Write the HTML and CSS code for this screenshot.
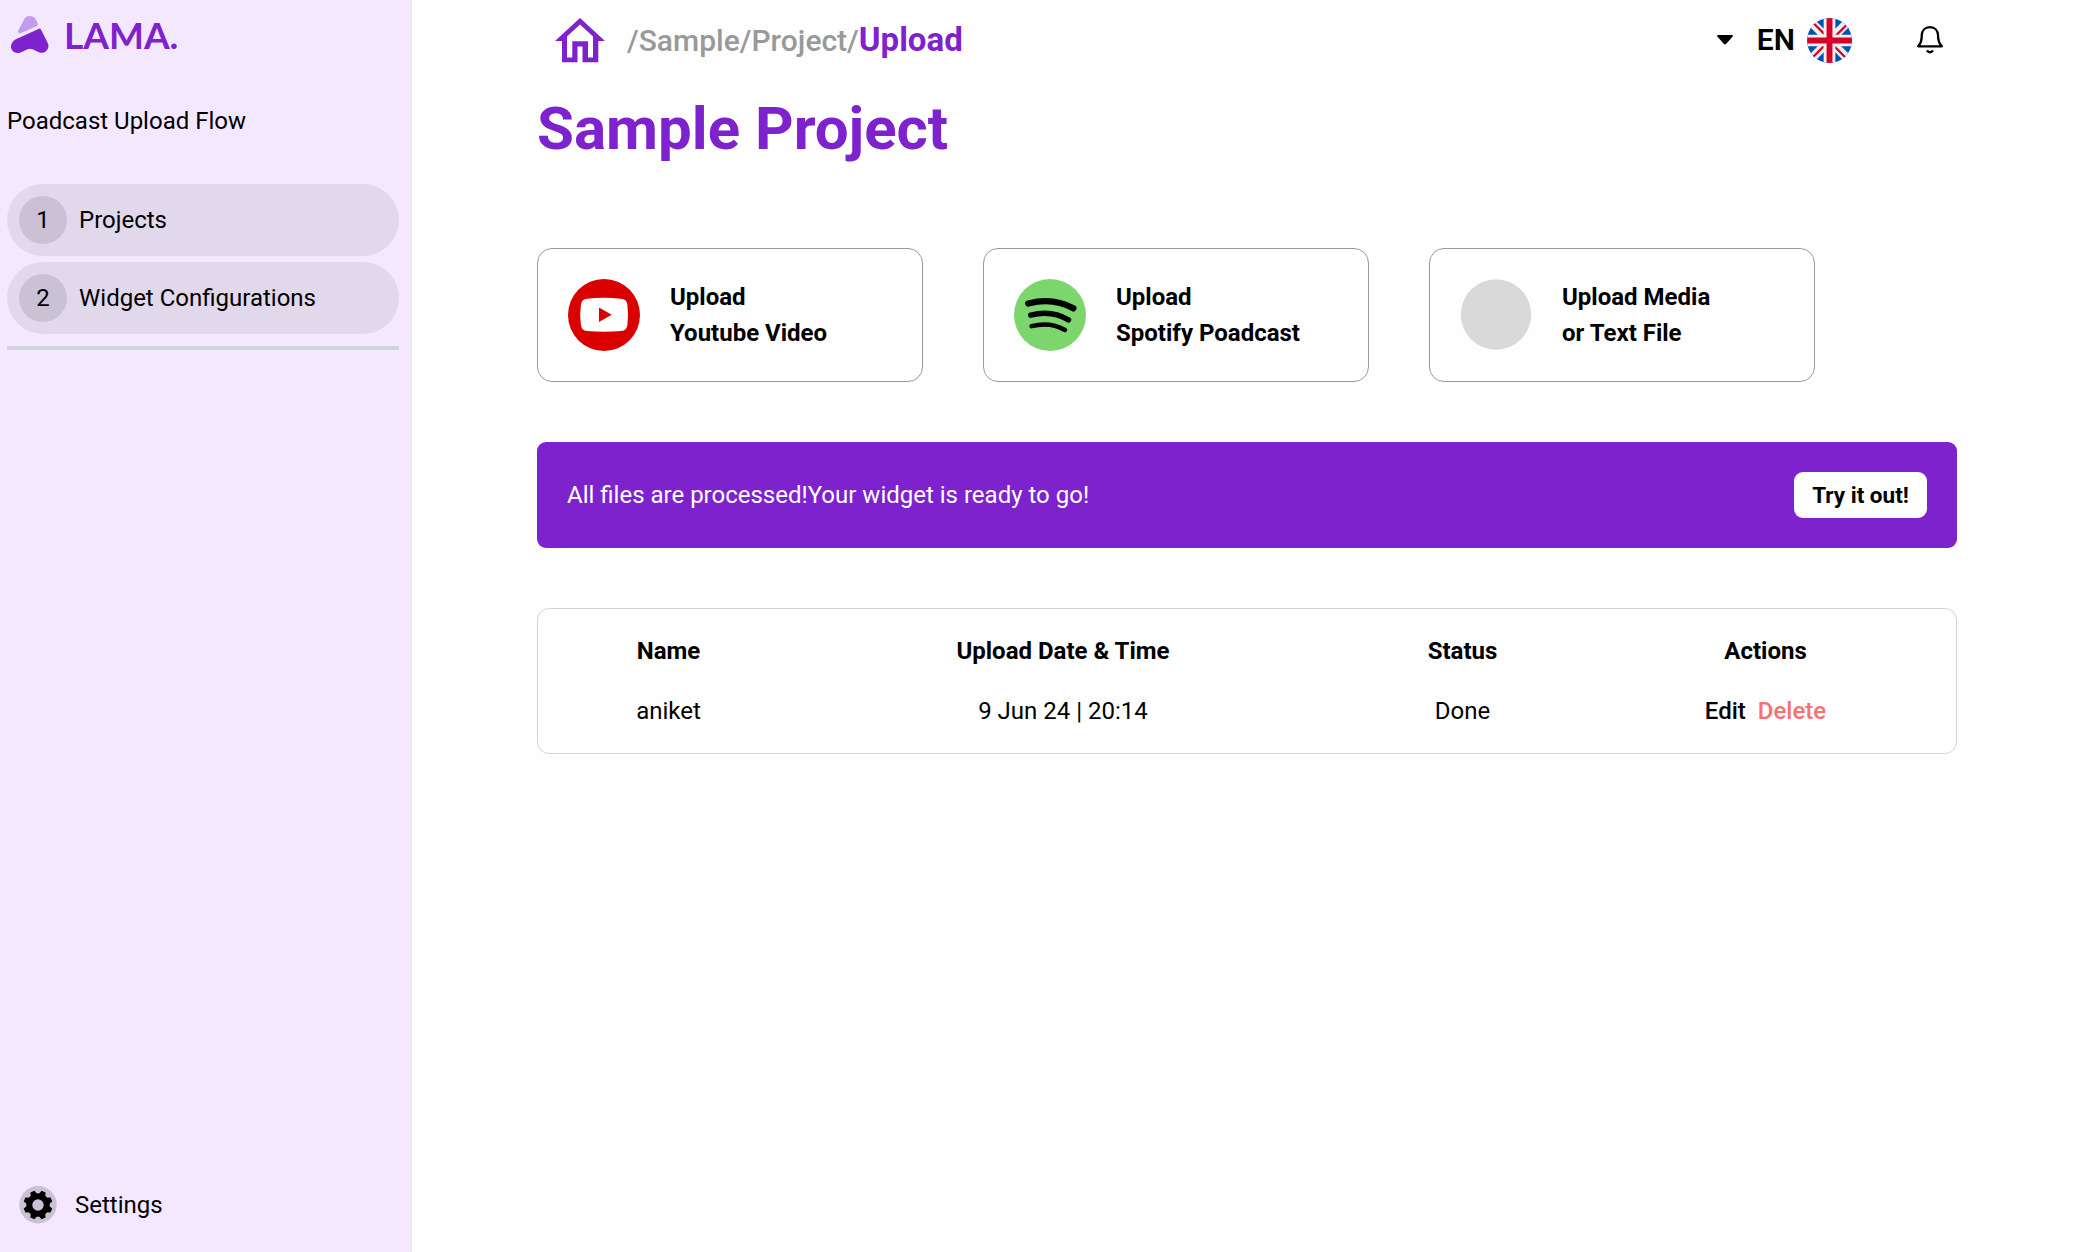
FILE: index.html
```html
<!DOCTYPE html>
<html lang="en">
<head>
<meta charset="utf-8">
<title>Sample Project</title>
<link rel="stylesheet" href="styles.css">
</head>
<body>
<div class="app">
  <aside class="sidebar">
    <div class="brand">
      <svg class="brand-mark" width="38" height="38" viewBox="0 0 38 38">
        <path fill="#c49ced" d="M13.2 3.200C15-.7 22-1.200 24.600 3L26.700 7.200Q27.200 9.600 24.600 10.800L9.500 17.300Q6.500 17.800 7.200 14.800Z"/>
        <path fill="#7e22ce" d="M28 12.700Q29.300 12.300 30.100 13.700L37 27.500C39 32.500 34.500 37.500 29.500 36.700Q27.700 36.500 24.300 34.500Q19 31 14.300 34.200Q9.500 37 6.700 37C1.500 37-1 32.500.400 28.200Q1.400 24.900 4.300 23.400Z"/>
      </svg>
      <span class="brand-name">LAMA.</span>
    </div>
    <p class="flow-title">Poadcast Upload Flow</p>
    <nav class="steps">
      <a class="step"><span class="step-number">1</span>Projects</a>
      <a class="step"><span class="step-number">2</span>Widget Configurations</a>
    </nav>
    <div class="divider"></div>
    <a class="settings">
      <svg width="38" height="38" viewBox="0 0 38 38">
        <circle cx="19" cy="18.700" r="18.700" fill="#cac1d4"/>
        <g transform="translate(19 19) rotate(22.500)">
          <circle r="8.700" fill="none" stroke="#000" stroke-width="6"/>
          <path d="M-3.600-10-2.200-14.500H2.200L3.600-10Z"/>
          <path transform="rotate(45)" d="M-3.600-10-2.200-14.500H2.200L3.600-10Z"/>
          <path transform="rotate(90)" d="M-3.600-10-2.200-14.500H2.200L3.600-10Z"/>
          <path transform="rotate(135)" d="M-3.600-10-2.200-14.500H2.200L3.600-10Z"/>
          <path transform="rotate(180)" d="M-3.600-10-2.200-14.500H2.200L3.600-10Z"/>
          <path transform="rotate(225)" d="M-3.600-10-2.200-14.500H2.200L3.600-10Z"/>
          <path transform="rotate(270)" d="M-3.600-10-2.200-14.500H2.200L3.600-10Z"/>
          <path transform="rotate(315)" d="M-3.600-10-2.200-14.500H2.200L3.600-10Z"/>
        </g>
      </svg>
      Settings
    </a>
  </aside>

  <main class="main">
    <header class="topbar">
      <svg class="home" width="50" height="45" viewBox="0 0 50 45">
        <path fill="#7e22ce" fill-rule="evenodd" d="M25 0 50 23H43.300V44.300H27.500V28.500H22.500V44.300H7V23H0ZM25 6.500 12 18.500V39.500H17.300V23.300H33V39.500H38V18.500Z"/>
      </svg>
      <div class="crumbs">/Sample/Project/<span class="crumb-current">Upload</span></div>
      <div class="tools">
        <svg width="16" height="10" viewBox="0 0 16 10"><path d="M1 0H15Q16.500.3 15.500 1.700L9 9Q8 9.800 7 9L.5 1.700Q-.5.3 1 0Z"/></svg>
        <span class="lang">EN</span>
        <svg class="flag" width="45" height="45" viewBox="0 0 45 45">
          <clipPath id="disc"><circle cx="22.500" cy="22.500" r="22.500"/></clipPath>
          <g clip-path="url(#disc)">
            <rect width="45" height="45" fill="#0052b4"/>
            <path d="M0 0 45 45M45 0 0 45" stroke="#f0f0f0" stroke-width="8.500"/>
            <path d="M6.600 5.200 18 16.600M39 7.500 28 18.500M17 28 6 39M27 28 39.500 40.500" stroke="#d80027" stroke-width="2.300"/>
            <path d="M22.500 0V45M0 22.500H45" stroke="#f0f0f0" stroke-width="11.700"/>
            <path d="M22.500 0V45M0 22.500H45" stroke="#d80027" stroke-width="5.900"/>
          </g>
        </svg>
        <svg class="bell" width="26" height="28" viewBox="0 0 26 28" fill="none" stroke="#000" stroke-width="2.300" stroke-linecap="round" stroke-linejoin="round">
          <path d="M1.200 20.300Q4.400 17 4.700 11.500V9.500C4.900 4.500 8 1.200 12.900 1.200S20.900 4.500 21.100 9.500V11.500Q21.500 17 24.800 20.300Z"/>
          <path d="M10.500 25.200Q13 27.300 15.400 25.200"/>
        </svg>
      </div>
    </header>

    <h1 class="title">Sample Project</h1>

    <section class="uploads">
      <div class="upload">
        <svg width="72" height="72" viewBox="0 0 72 72">
          <circle cx="36" cy="36" r="36" fill="#db0000"/>
          <path fill="#fff" d="M19 19.700Q36 18 53 19.700Q59 20.300 59.400 26Q60.600 36 59.400 45.700Q59 51.500 53 51.900Q36 53.500 19 51.900Q13.400 51.500 12.900 45.700Q11.400 36 12.900 26Q13.400 20.300 19 19.700Z"/>
          <path fill="#db0000" d="M31 28.500 43.700 35.700 31 43Z"/>
        </svg>
        <div class="upload-label">Upload<br>Youtube Video</div>
      </div>
      <div class="upload">
        <svg width="72" height="72" viewBox="0 0 72 72">
          <circle cx="36" cy="36" r="36" fill="#7cd66c"/>
          <g fill="none" stroke="#000" stroke-linecap="round">
            <path stroke-width="6.400" d="M14.300 24.500Q39 18 59.300 29.300"/>
            <path stroke-width="5.400" d="M16.700 36.200Q37 30.500 54.500 40.800"/>
            <path stroke-width="4.400" d="M17.500 47.200Q36 42.300 51 51"/>
          </g>
        </svg>
        <div class="upload-label">Upload<br>Spotify Poadcast</div>
      </div>
      <div class="upload">
        <svg width="72" height="72" viewBox="0 0 72 72"><circle cx="36" cy="35.500" r="35.200" fill="#d9d9d9"/></svg>
        <div class="upload-label">Upload Media<br>or Text File</div>
      </div>
    </section>

    <section class="banner">
      <span>All files are processed!Your widget is ready to go!</span>
      <button class="try">Try it out!</button>
    </section>

    <section class="files">
      <div class="row head"><span>Name</span><span>Upload Date &amp; Time</span><span>Status</span><span>Actions</span></div>
      <div class="row"><span>aniket</span><span>9 Jun 24 | 20:14</span><span>Done</span><span class="actions"><a>Edit</a><a class="delete">Delete</a></span></div>
    </section>
  </main>
</div>
</body>
</html>
```
FILE: styles.css
```css
* { box-sizing: border-box; }

body {
  margin: 0;
  background: #fefefe;
  color: #000;
  font: 400 24px/36px Roboto, "Liberation Sans", sans-serif;
}

svg { display: block; flex: none; }

.app { display: flex; height: 1252px; overflow: hidden; }

.sidebar {
  width: 412px;
  flex: none;
  display: flex;
  flex-direction: column;
  padding: 16px 12px 0 7px;
  background: #f3e8ff;
  border-right: 1px solid #e5e7eb;
}

.brand { display: flex; height: 38px; padding-left: 4px; gap: 15px; }
.brand-name {
  font: 700 37px/37px Lato, sans-serif;
  color: #7e22ce;
}

.flow-title { margin: 49px 0 0; }

.steps { display: flex; flex-direction: column; gap: 6px; margin-top: 45px; }
.step {
  display: flex;
  align-items: center;
  gap: 12px;
  height: 72px;
  padding: 0 12px;
  border-radius: 36px;
  background: #e1d8ec;
}
.step-number {
  width: 48px;
  border-radius: 50%;
  background: #cac1d4;
  line-height: 48px;
  text-align: center;
}

.divider { height: 4px; margin-top: 12px; background: #d1d5db; }

.settings { display: flex; align-items: center; gap: 18px; margin: auto 0 28px; padding-left: 12px; }

.main { flex: 1; padding: 0 122px 0 125px; }

.topbar { display: flex; align-items: center; height: 80px; padding: 0 14px 0 18px; }
.crumbs { margin-left: 22px; font-size: 30px; font-weight: 500; color: #999; }
.crumb-current { font-size: 33px; font-weight: 700; color: #7e22ce; }
.tools { display: flex; align-items: center; margin-left: auto; }
.lang { margin: 0 12px 0 24px; font-size: 30px; font-weight: 600; }
.bell { margin-left: 65px; }

.title { margin: 4px 0 0; font-size: 60px; line-height: 90px; font-weight: 700; color: #7e22ce; }

.uploads { display: flex; gap: 60px; margin-top: 74px; }
.upload {
  display: flex;
  align-items: center;
  gap: 30px;
  width: 386px;
  height: 134px;
  padding-left: 30px;
  border: 1px solid #999;
  border-radius: 15px;
}
.upload-label { font-weight: 700; }

.banner {
  display: flex;
  align-items: center;
  justify-content: space-between;
  height: 106px;
  margin-top: 60px;
  padding: 0 30px;
  border-radius: 9px;
  background: #7e22ce;
  color: #fff;
}
.try {
  width: 133px;
  height: 46px;
  padding: 0 0 1px;
  border: 0;
  border-radius: 9px;
  background: #fff;
  color: #000;
  font: inherit;
  font-size: 22.5px;
  font-weight: 700;
}

.files {
  display: grid;
  gap: 24px;
  height: 146px;
  margin-top: 60px;
  padding-top: 24px;
  align-content: start;
  border: 1px solid #d1d5db;
  border-radius: 12px;
}
.row { display: grid; grid-template-columns: 261px 528px 271px 335px; text-align: center; }
.head { font-weight: 700; }
.actions { display: flex; justify-content: center; gap: 12px; font-weight: 500; }
.delete { color: #f87171; }
```
